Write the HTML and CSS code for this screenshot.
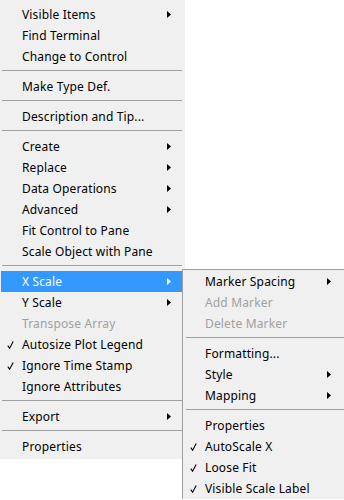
FILE: index.html
```html
<!DOCTYPE html>
<html>
<head>
  <meta charset="UTF-8">
  <meta name="viewport" content="width=device-width, initial-scale=1.0">
  <title>Graph Shortcut Menu</title>
  <link rel="stylesheet" href="styles.css">
</head>
<body>
  <div class="menu main-menu">
    <div class="item sub"><span class="check"></span><span class="label">Visible Items</span><span class="arrow"><svg width="4" height="7" viewBox="0 0 4 7"><polygon points="0,0 4,3.5 0,7"/></svg></span></div>
    <div class="item"><span class="check"></span><span class="label">Find Terminal</span><span class="arrow"></span></div>
    <div class="item"><span class="check"></span><span class="label">Change to Control</span><span class="arrow"></span></div>
    <div class="sep"></div>
    <div class="item"><span class="check"></span><span class="label">Make Type Def.</span><span class="arrow"></span></div>
    <div class="sep"></div>
    <div class="item"><span class="check"></span><span class="label">Description and Tip...</span><span class="arrow"></span></div>
    <div class="sep"></div>
    <div class="item sub"><span class="check"></span><span class="label">Create</span><span class="arrow"><svg width="4" height="7" viewBox="0 0 4 7"><polygon points="0,0 4,3.5 0,7"/></svg></span></div>
    <div class="item sub"><span class="check"></span><span class="label">Replace</span><span class="arrow"><svg width="4" height="7" viewBox="0 0 4 7"><polygon points="0,0 4,3.5 0,7"/></svg></span></div>
    <div class="item sub"><span class="check"></span><span class="label">Data Operations</span><span class="arrow"><svg width="4" height="7" viewBox="0 0 4 7"><polygon points="0,0 4,3.5 0,7"/></svg></span></div>
    <div class="item sub"><span class="check"></span><span class="label">Advanced</span><span class="arrow"><svg width="4" height="7" viewBox="0 0 4 7"><polygon points="0,0 4,3.5 0,7"/></svg></span></div>
    <div class="item"><span class="check"></span><span class="label">Fit Control to Pane</span><span class="arrow"></span></div>
    <div class="item"><span class="check"></span><span class="label">Scale Object with Pane</span><span class="arrow"></span></div>
    <div class="sep"></div>
    <div class="item sub active"><span class="check"></span><span class="label">X Scale</span><span class="arrow"><svg width="4" height="7" viewBox="0 0 4 7"><polygon points="0,0 4,3.5 0,7"/></svg></span></div>
    <div class="item sub"><span class="check"></span><span class="label">Y Scale</span><span class="arrow"><svg width="4" height="7" viewBox="0 0 4 7"><polygon points="0,0 4,3.5 0,7"/></svg></span></div>
    <div class="item disabled"><span class="check"></span><span class="label">Transpose Array</span><span class="arrow"></span></div>
    <div class="item"><span class="check"><svg width="7" height="8" viewBox="0 0 7 8"><path d="M0.8 4.6 L2.6 7.2 L6.2 0.6"/></svg></span><span class="label">Autosize Plot Legend</span><span class="arrow"></span></div>
    <div class="item"><span class="check"><svg width="7" height="8" viewBox="0 0 7 8"><path d="M0.8 4.6 L2.6 7.2 L6.2 0.6"/></svg></span><span class="label">Ignore Time Stamp</span><span class="arrow"></span></div>
    <div class="item"><span class="check"></span><span class="label">Ignore Attributes</span><span class="arrow"></span></div>
    <div class="sep"></div>
    <div class="item sub"><span class="check"></span><span class="label">Export</span><span class="arrow"><svg width="4" height="7" viewBox="0 0 4 7"><polygon points="0,0 4,3.5 0,7"/></svg></span></div>
    <div class="sep"></div>
    <div class="item"><span class="check"></span><span class="label">Properties</span><span class="arrow"></span></div>
  </div>

  <!-- X Scale submenu, opened over the main menu -->
  <div class="menu submenu">
    <div class="item sub"><span class="check"></span><span class="label">Marker Spacing</span><span class="arrow"><svg width="4" height="7" viewBox="0 0 4 7"><polygon points="0,0 4,3.5 0,7"/></svg></span></div>
    <div class="item disabled"><span class="check"></span><span class="label">Add Marker</span><span class="arrow"></span></div>
    <div class="item disabled"><span class="check"></span><span class="label">Delete Marker</span><span class="arrow"></span></div>
    <div class="sep"></div>
    <div class="item"><span class="check"></span><span class="label">Formatting...</span><span class="arrow"></span></div>
    <div class="item sub"><span class="check"></span><span class="label">Style</span><span class="arrow"><svg width="4" height="7" viewBox="0 0 4 7"><polygon points="0,0 4,3.5 0,7"/></svg></span></div>
    <div class="item sub"><span class="check"></span><span class="label">Mapping</span><span class="arrow"><svg width="4" height="7" viewBox="0 0 4 7"><polygon points="0,0 4,3.5 0,7"/></svg></span></div>
    <div class="sep"></div>
    <div class="item"><span class="check"></span><span class="label">Properties</span><span class="arrow"></span></div>
    <div class="item"><span class="check"><svg width="7" height="8" viewBox="0 0 7 8"><path d="M0.8 4.6 L2.6 7.2 L6.2 0.6"/></svg></span><span class="label">AutoScale X</span><span class="arrow"></span></div>
    <div class="item"><span class="check"><svg width="7" height="8" viewBox="0 0 7 8"><path d="M0.8 4.6 L2.6 7.2 L6.2 0.6"/></svg></span><span class="label">Loose Fit</span><span class="arrow"></span></div>
    <div class="item"><span class="check"><svg width="7" height="8" viewBox="0 0 7 8"><path d="M0.8 4.6 L2.6 7.2 L6.2 0.6"/></svg></span><span class="label">Visible Scale Label</span><span class="arrow"></span></div>
  </div>
</body>
</html>
```

FILE: styles.css
```css
body {
  margin: 0;
  background: #fff;
  font-family: "Noto Sans", "Open Sans", sans-serif;
  font-size: 12px;
  letter-spacing: 0.15px;
  color: #000;
}
.menu {
  background: #f0f0f0;
  box-sizing: border-box;
}
.main-menu {
  width: 185px;
  padding: 4px 0 2px 0;
}
.submenu {
  position: absolute;
  left: 182px;
  top: 269px;
  width: 175px;
  padding-top: 1px;
  border-top: 1px solid #a0a0a0;
  border-left: 1px solid #a0a0a0;
}
.item {
  display: flex;
  align-items: center;
  height: 21px;
  margin: 0 3px 0 1px;
}
.submenu .item {
  margin: 0;
}
.check {
  width: 21px;
  padding-left: 6px;
  box-sizing: border-box;
  display: flex;
  align-items: center;
}
.submenu .check {
  width: 22px;
  padding-left: 7px;
}
.check svg path {
  fill: none;
  stroke: #000;
  stroke-width: 1.1;
}
.label {
  flex: 1;
  white-space: nowrap;
  line-height: 21px;
}
.arrow {
  width: 15px;
  display: flex;
  align-items: center;
}
.submenu .arrow {
  width: 30px;
}
.arrow svg polygon {
  fill: #000;
}
.disabled .label {
  color: #a0a0a0;
}
.active {
  background: #3399ff;
  color: #fff;
}
.active .arrow svg polygon {
  fill: #fff;
}
.sep {
  height: 1px;
  background: #a0a0a0;
  margin: 3px 3px 5px 2px;
}
.submenu .sep {
  margin: 3px 1px 5px 3px;
}
```
